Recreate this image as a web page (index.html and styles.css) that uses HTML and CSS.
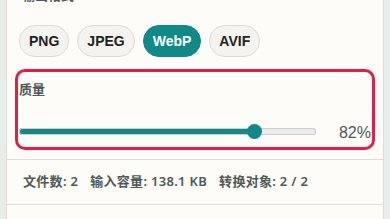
FILE: index.html
```html
<!DOCTYPE html>
<html lang="zh-CN">
<head>
  <meta charset="UTF-8" />
  <meta name="viewport" content="width=device-width, initial-scale=1.0"/>
  <title>图片转换</title>
  <link rel="stylesheet" href="styles.css">
</head>
<body>
  <div class="panel">
    <!-- 输出设置 -->
    <div class="settings">
      <h3 class="section-title">输出格式</h3>
      <div class="format-list">
        <button class="format-btn">PNG</button>
        <button class="format-btn">JPEG</button>
        <button class="format-btn active">WebP</button>
        <button class="format-btn">AVIF</button>
      </div>

      <div class="quality">
        <label class="quality-label" for="quality">质量</label>
        <div class="quality-row">
          <input type="range" id="quality" class="quality-range" min="0" max="100" value="82"
                 style="--fill: 81%">
          <span class="quality-value">82%</span>
        </div>
      </div>
    </div>

    <!-- 统计 -->
    <div class="stats">
      <span>文件数: 2</span>
      <span>输入容量: 138.1 KB</span>
      <span>转换对象: 2 / 2</span>
    </div>

    <div class="file-area"></div>
  </div>
</body>
</html>
```

FILE: styles.css
```css
body {
  margin: 0;
  padding: 0 6px;
  background: #e9ede9;
  font-family: "Liberation Sans", "Noto Sans CJK SC", sans-serif;
  color: #505957;
  overflow: hidden;
}

.panel {
  margin-top: -27px;
  background: #fdfcf9;
  border: 1px solid #dedcd5;
}

.settings {
  padding: 12px 12px 9px;
  border-bottom: 1px solid #e0ded8;
}

.section-title {
  margin: 0 0 21px 3px;
  font-family: "Noto Sans CJK SC", sans-serif;
  font-size: 13px;
  line-height: 18px;
  font-weight: 700;
  color: #505957;
}

/* format buttons */
.format-list {
  display: flex;
  gap: 8px;
}

.format-btn {
  height: 32px;
  padding: 0 9px;
  border: 1px solid #dcdad2;
  border-radius: 16px;
  background: #f4f3ef;
  color: #222;
  font-family: "Liberation Sans", sans-serif;
  font-size: 14px;
  font-weight: 700;
  cursor: pointer;
}

.format-btn.active {
  background: #0f8a89;
  border-color: #0f8a89;
  color: #fff;
}

/* quality */
.quality {
  margin: 12px -4px 0;
  padding: 8px 1px 5px;
  border: 3px solid #e11d48;
  border-radius: 10px;
}

.quality-label {
  display: block;
  margin-bottom: 22px;
  font-family: "Noto Sans CJK SC", sans-serif;
  font-size: 13px;
  line-height: 18px;
  font-weight: 700;
  color: #505957;
}

.quality-row {
  display: flex;
  align-items: center;
  gap: 7px;
}

.quality-range {
  flex: 1;
  margin: 0;
  height: 16px;
  -webkit-appearance: none;
  appearance: none;
  background: transparent;
}

.quality-range::-webkit-slider-runnable-track {
  height: 7px;
  border-radius: 4px;
  background: linear-gradient(to right, #0f8a89 var(--fill), #ebebeb var(--fill));
  box-shadow: inset 0 0 0 1px #cfcfcf;
}

.quality-range::-webkit-slider-thumb {
  -webkit-appearance: none;
  width: 15px;
  height: 15px;
  margin-top: -4px;
  margin-left: -3px;
  border-radius: 50%;
  background: #0f8a89;
  border: none;
}

.quality-value {
  width: 48px;
  padding-top: 4px;
  text-align: right;
  font-size: 16px;
  color: #4f5957;
}

/* stats */
.stats {
  display: flex;
  gap: 12px;
  padding: 12px 16px 14px;
  border-bottom: 1px solid #e0ded8;
  font-family: "Noto Sans", "Noto Sans CJK SC", sans-serif;
  font-size: 13px;
  line-height: 18px;
  font-weight: 600;
  letter-spacing: 0.3px;
  color: #4f5957;
}

.file-area {
  height: 60px;
}
```
